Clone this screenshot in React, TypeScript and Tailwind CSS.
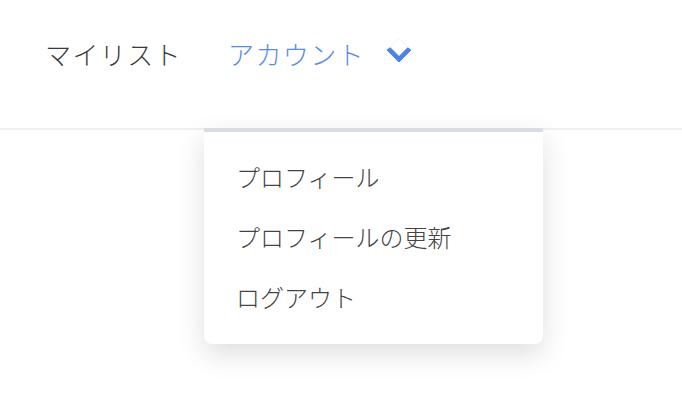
const menuItems = ['プロフィール', 'プロフィールの更新', 'ログアウト'];

export default function App() {
  return (
    <div
      className="min-h-[400px] w-full bg-white"
      style={{ fontFamily: '"Noto Sans CJK JP", "Noto Sans", sans-serif' }}
    >
      {/* Navbar */}
      <nav className="h-[130px] border-b-2 border-[#f0f0f1] bg-white">
        <div className="flex h-full items-stretch pl-[45px]">
          <div className="flex items-center pb-[22px] text-[26px] font-light tracking-[1.4px] text-[#3a3a3a]">
            マイリスト
          </div>

          {/* Account dropdown */}
          <div className="relative ml-[22px] flex items-center pb-[22px] pl-6">
            <span className="text-[26px] font-light tracking-[1.4px] text-[#5a8be6]">アカウント</span>
            <span className="ml-[25px] mt-[-7px] block h-[18px] w-[18px] rotate-45 border-b-[5px] border-r-[5px] border-l border-t border-b-[#4d83e2] border-r-[#4d83e2] border-l-[#eef2fb] border-t-[#eef2fb] rounded-[1px]" />

            <div className="absolute left-0 top-full z-10 w-[339px] rounded-b-lg border-t-4 border-[#d9dce1] bg-white pt-[15px] pb-[17px] shadow-[0_10px_28px_rgba(0,0,0,0.13)]">
              {menuItems.map((item) => (
                <div
                  key={item}
                  className="flex h-[60px] items-center px-8 text-[24px] font-light text-[#444] hover:bg-gray-50"
                >
                  {item}
                </div>
              ))}
            </div>
          </div>
        </div>
      </nav>
    </div>
  );
}
